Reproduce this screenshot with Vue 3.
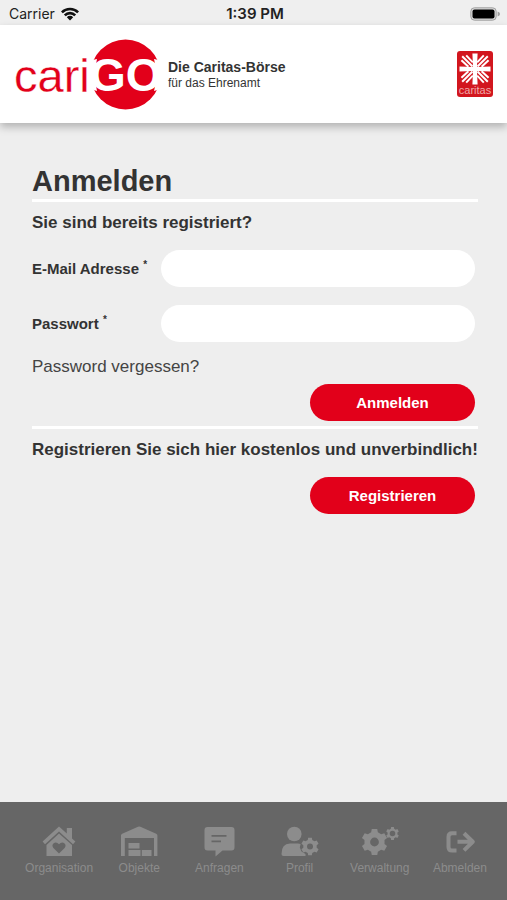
<template>
  <div class="app">
    <div class="status">
      <div class="status-left">
        <span>Carrier</span>
        <svg width="18" height="14" viewBox="0 0 18 14" aria-hidden="true">
          <g fill="none" stroke="#111" stroke-width="2.6">
            <path d="M0.9 5.4a11.4 11.4 0 0 1 16.2 0" />
            <path d="M3.8 8.3a7.3 7.3 0 0 1 10.4 0" />
          </g>
          <path d="M5.8 10.2a4.5 4.5 0 0 1 6.4 0L9 13.5z" fill="#111" />
        </svg>
      </div>
      <span class="status-time">1:39 PM</span>
      <div class="status-right">
        <svg width="31" height="14" viewBox="0 0 31 14" aria-hidden="true">
          <rect x="0.8" y="0.8" width="25.4" height="12.4" rx="3.6" fill="#d8d8d8" stroke="#a0a0a0" />
          <rect x="2.5" y="2.5" width="22" height="9" rx="2" fill="#000" />
          <path d="M27.6 4.6q2.4 0.8 2.4 2.4t-2.4 2.4z" fill="#a0a0a0" />
        </svg>
      </div>
    </div>

    <header class="header">
      <svg class="logo" width="148" height="74" viewBox="0 0 148 74" role="img" aria-label="cariGO">
        <circle cx="111.5" cy="37.5" r="35" fill="#e2001a" />
        <!-- the letters open the disc on both sides -->
        <path d="M74 27Q78 22.500 83 22L80 38L83 54Q78 53 74 48z" fill="#fff" />
        <path d="M149 27Q145 22.500 140 22L143.500 38L140 54Q145 53 149 48z" fill="#fff" />
        <text class="logo-cari" x="0" y="55">cari</text>
        <text class="logo-go" x="76" y="54">GO</text>
      </svg>
      <div class="claim">
        <strong>Die Caritas-Börse</strong>
        <span>für das Ehrenamt</span>
      </div>
      <svg class="caritas" width="36" height="46" viewBox="0 0 36 46" role="img" aria-label="caritas">
        <rect width="36" height="46" rx="3" fill="#d2161e" />
        <g stroke="#fff" stroke-width="2" fill="none">
          <g v-for="angle in [0, 90, 180, 270]" :key="angle" :transform="`rotate(${angle} 18 18)`">
            <path d="M15.500 15.500L5.200 5.200M15.800 11.400L9.200 4.400M11.400 15.800L4.400 9.200" />
          </g>
        </g>
        <path d="M15.4 2.5h5.2l-.6 13.500 13.500-.6v5.200l-13.500-.6.6 13.500h-5.200l.6-13.500-13.500.6v-5.200l13.500.6z" fill="#fff" />
        <text class="caritas-text" x="18" y="43">caritas</text>
      </svg>
    </header>

    <main class="main">
      <h1>Anmelden</h1>
      <form class="section" @submit.prevent>
        <h2>Sie sind bereits registriert?</h2>
        <div class="fields">
          <div class="field">
            <label for="email">E-Mail Adresse <sup>*</sup></label>
            <input id="email" v-model="email" type="email" />
          </div>
          <div class="field">
            <label for="password">Passwort <sup>*</sup></label>
            <input id="password" v-model="password" type="password" />
          </div>
        </div>
        <a class="forgot" href="#">Password vergessen?</a>
        <button class="btn" type="submit">Anmelden</button>
      </form>
      <section class="section">
        <h2>Registrieren Sie sich hier kostenlos und unverbindlich!</h2>
        <button class="btn btn-register" type="button">Registrieren</button>
      </section>
    </main>

    <nav class="tabbar">
      <a v-for="tab in tabs" :key="tab.label" class="tab" href="#">
        <svg width="36" height="32" viewBox="0 0 36 32" aria-hidden="true">
          <path v-for="(d, i) in tab.fills" :key="'f' + i" :d="d" class="tab-fill" />
          <path v-for="(d, i) in tab.lines" :key="'l' + i" :d="d" class="tab-line" />
        </svg>
        <span>{{ tab.label }}</span>
      </a>
    </nav>
  </div>
</template>

<script setup>
import { ref } from 'vue'

const email = ref('')
const password = ref('')

// closed gear outline with a round hole in the middle
const gear = (cx, cy, outer, inner, hole, teeth) => {
  const step = (Math.PI * 2) / teeth
  const points = []
  for (let i = 0; i < teeth; i++) {
    const a = i * step - Math.PI / 2
    const corners = [
      [inner, -0.32],
      [outer, -0.2],
      [outer, 0.2],
      [inner, 0.32],
    ]
    corners.forEach(([r, t]) => {
      const x = cx + r * Math.cos(a + t * step)
      const y = cy + r * Math.sin(a + t * step)
      points.push(`${x.toFixed(2)} ${y.toFixed(2)}`)
    })
  }
  return `M${points.join('L')}zM${cx - hole} ${cy}a${hole} ${hole} 0 1 0 ${hole * 2} 0a${hole} ${hole} 0 1 0 ${-hole * 2} 0z`
}

const tabs = [
  {
    label: 'Organisation',
    fills: [
      'M18 0.5L25.8 7.6V2H31V12.4L34.4 15.6L32 18.2L18 5.6L4 18.2L1.6 15.6z',
      'M18 7.6L31 19V30H5.5V19zM18 27.500l5.600-5.600q1.900-2.400 0-4.400-2.800-2.200-5.600.8-2.800-3-5.600-.8-1.900 2 0 4.400z',
    ],
    lines: [],
  },
  {
    label: 'Objekte',
    fills: [
      'M0 30V9.500Q0 8.200 1.200 7.700L17 .8q1.200-.5 2.400 0L35.200 7.700Q36.400 8.200 36.400 9.500V30H33V12H3.800V30z',
      'M7.500 17H18.500V22.500H7.500zM7.500 24H19.500V30H7.500zM20.800 24H30.500V30H20.800z',
    ],
    lines: [],
  },
  {
    label: 'Anfragen',
    fills: [
      'M6.500 1H30.500Q33.500 1 33.500 4V21.500Q33.500 24.500 30.500 24.500H21.500L14.500 30.500V24.500H6.500Q3.500 24.500 3.500 21.500V4Q3.500 1 6.500 1zM10.500 9V10.800H25.500V9zM10.500 14.500V16.300H20V14.500z',
    ],
    lines: [],
  },
  {
    label: 'Profil',
    fills: [
      'M5 8a7.300 7.300 0 1 1 14.600 0a7.300 7.300 0 1 1-14.600 0z',
      'M1.500 30Q-.5 30-.5 28Q-.5 17.500 8 17.500H16Q17.500 17.500 18.600 18L17.800 21.500L19.500 25.500L23.500 28V30z',
      gear(28, 20.5, 9, 6.8, 3, 6),
    ],
    lines: [],
  },
  {
    label: 'Verwaltung',
    fills: [gear(12.5, 16, 13.2, 10.2, 4.4, 6), gear(30.5, 7.5, 6.6, 5, 2.8, 6)],
    lines: [],
  },
  {
    label: 'Abmelden',
    fills: [],
    lines: ['M14.500 7.200H10Q6.500 7.200 6.500 10.700V21Q6.500 24.500 10 24.500H14.500', 'M15.500 15.800H30M22 7.200L30.800 15.800L22 24.400'],
  },
]
</script>

<style>
body {
  margin: 0;
  background: #eee;
}
</style>

<style scoped>
.app {
  display: flex;
  flex-direction: column;
  min-height: 100vh;
  font-family: 'Liberation Sans', Arial, sans-serif;
  color: #333;
}

/* status bar */
.status {
  display: grid;
  grid-template-columns: 1fr auto 1fr;
  align-items: center;
  height: 25px;
  padding: 2px 6px 0 9px;
  box-sizing: border-box;
  font-family: Inter, sans-serif;
  font-size: 14px;
  color: #222;
  background: #efefef;
}
.status-left {
  display: flex;
  align-items: center;
  gap: 6px;
}
.status-time {
  font-size: 15px;
  font-weight: 600;
}
.status-right {
  display: flex;
  justify-content: flex-end;
}

/* header */
.header {
  display: flex;
  align-items: center;
  height: 98px;
  padding: 0 14px;
  background: #fff;
  box-shadow: 0 4px 8px rgba(0, 0, 0, 0.25);
}
.logo {
  overflow: visible;
}
.logo-cari {
  font-size: 47px;
  fill: #e2001a;
  stroke: #fff;
  stroke-width: 0.3;
}
.logo-go {
  font-size: 46px;
  font-weight: bold;
  fill: #fff;
}
.claim {
  display: flex;
  flex-direction: column;
  margin-left: 6px;
  padding-top: 2px;
  font-size: 12px;
  line-height: 16px;
}
.claim strong {
  font-size: 14px;
}
.caritas {
  margin-left: auto;
}
.caritas-text {
  font-size: 11px;
  text-anchor: middle;
  fill: #f0a8a8;
}

/* login */
.main {
  flex: 1;
  padding: 40px 29px 0 32px;
}
h1 {
  margin: 0;
  font-size: 29px;
  line-height: 36px;
}
.section {
  display: flex;
  flex-direction: column;
  padding: 8px 0 5px;
  border-top: 3px solid #fff;
}
h2 {
  margin: 0 -8px 0 0;
  font-size: 17px;
  line-height: 26px;
}
.fields {
  display: flex;
  flex-direction: column;
  gap: 18px;
  margin: 14px 3px 0 0;
}
.field {
  display: flex;
  align-items: center;
}
.field label {
  width: 129px;
  font-size: 15px;
  font-weight: bold;
}
.field sup {
  font-size: 10px;
  line-height: 0;
}
.field input {
  flex: 1;
  min-width: 0;
  height: 37px;
  box-sizing: border-box;
  padding: 0 16px;
  border: 0;
  border-radius: 19px;
  font: inherit;
  background: #fff;
}
.forgot {
  align-self: flex-start;
  margin: 14px 0 6px;
  font-size: 17px;
  line-height: 22px;
  color: #444;
  text-decoration: none;
}
.btn {
  align-self: flex-end;
  width: 165px;
  height: 37px;
  margin-right: 3px;
  border: 0;
  border-radius: 19px;
  font: bold 15px 'Liberation Sans', Arial, sans-serif;
  color: #fff;
  background: #e2001a;
}
.btn-register {
  margin-top: 14px;
}

/* bottom navigation */
.tabbar {
  display: flex;
  height: 98px;
  padding: 24px 7px 0 19px;
  box-sizing: border-box;
  background: #666;
}
.tab {
  display: flex;
  flex: 1;
  flex-direction: column;
  align-items: center;
  min-width: 0;
  gap: 2px;
  font-size: 12px;
  line-height: 16px;
  color: #8c8c8c;
  text-decoration: none;
}
.tab svg {
  overflow: visible;
}
.tab-fill {
  fill: currentColor;
  fill-rule: evenodd;
}
.tab-line {
  fill: none;
  stroke: currentColor;
  stroke-width: 4;
  stroke-linejoin: round;
}
</style>
